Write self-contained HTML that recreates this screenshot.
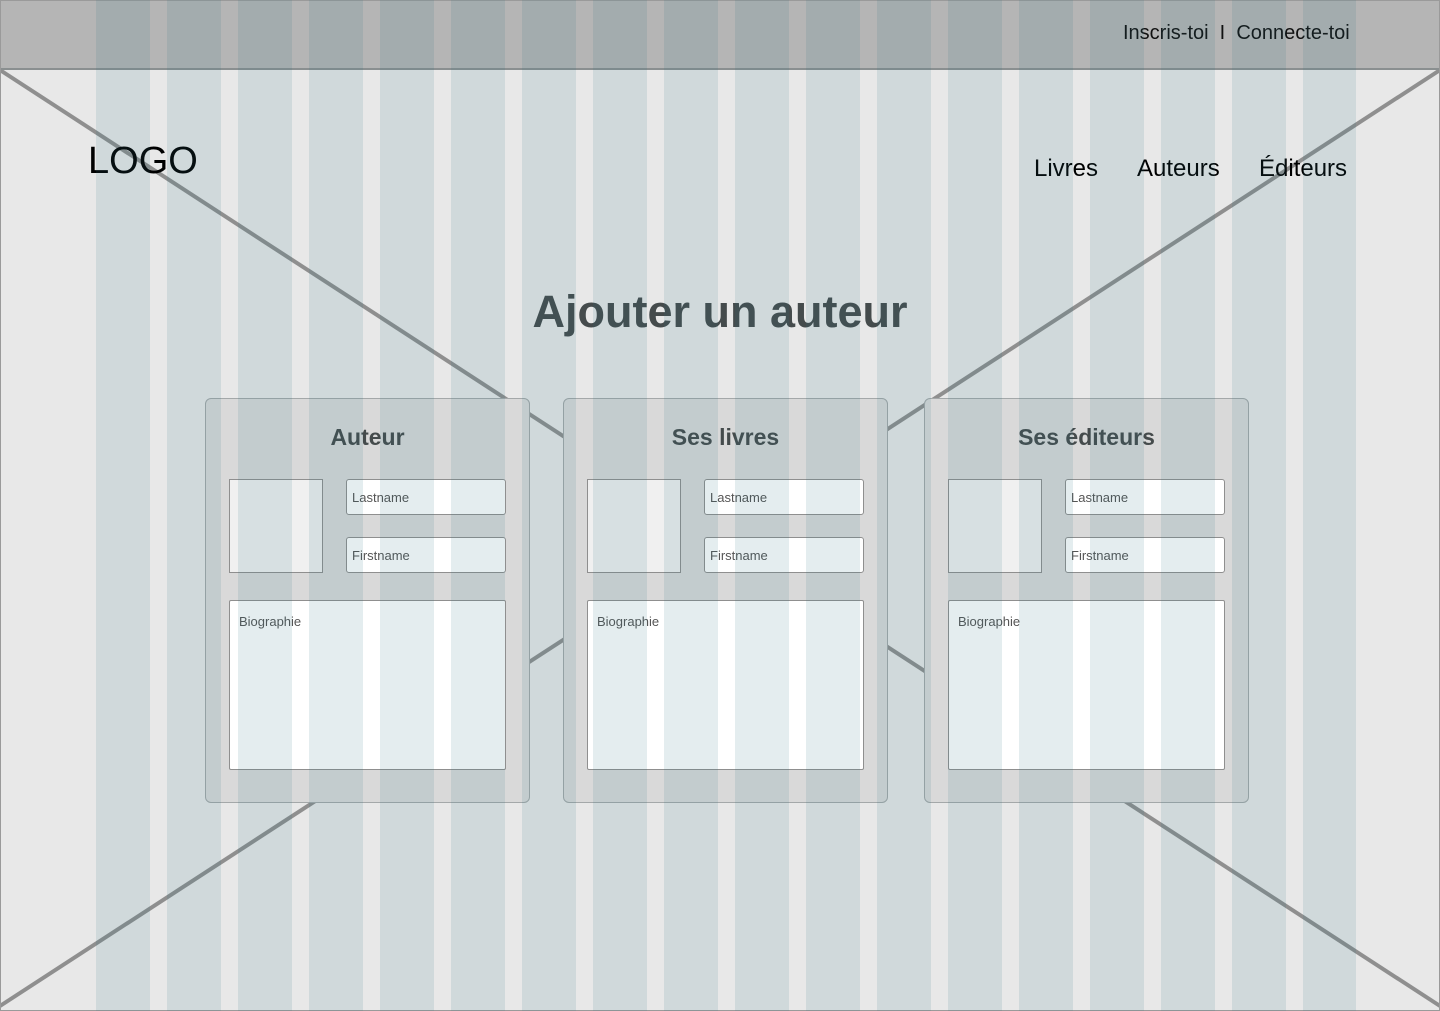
<!DOCTYPE html>
<html><head><meta charset="utf-8"><style>
*{margin:0;padding:0;box-sizing:border-box}
body{width:1440px;height:1011px;position:relative;overflow:hidden;background:#e8e8e8;font-family:"Liberation Sans",sans-serif}
.hdr{position:absolute;left:0;top:0;width:1440px;height:70px;background:#b5b5b5;border:1px solid #8f9394;border-bottom:2px solid #8a8f90}
.frame{position:absolute;left:0;top:0;width:1440px;height:1011px;border:1px solid #9a9a9a}
.t{position:absolute;white-space:nowrap}
.card{position:absolute;top:398px;width:325px;height:405px;background:#d9d9d9;border:1px solid #a4a8a9;border-radius:6px}
.card h2{position:absolute;top:25px;left:0;width:100%;text-align:center;font:bold 23px "Liberation Sans",sans-serif;color:#454b4c}
.ph{position:absolute;left:23px;top:80px;width:94px;height:94px;background:#f0f0f0;border:1px solid #8f8f8f}
.in{position:absolute;left:140px;width:160px;height:36px;background:#fff;border:1px solid #8f8f8f;border-radius:3px;font:13px "Liberation Sans",sans-serif;color:#555;padding:10px 0 0 5px}
.bio{position:absolute;left:23px;top:201px;width:277px;height:170px;background:#fff;border:1px solid #8f8f8f;border-radius:2px;font:13px "Liberation Sans",sans-serif;color:#555;padding:13px 0 0 9px}
.cols{position:absolute;left:0;top:0;width:1440px;height:1011px;pointer-events:none}
</style></head><body>
<svg class="cols" style="z-index:0" width="1440" height="1011"><line x1="0" y1="70" x2="1440" y2="1006" stroke="#8f8f8f" stroke-width="4"/><line x1="1440" y1="70" x2="0" y2="1006" stroke="#8f8f8f" stroke-width="4"/></svg>
<div class="hdr"></div>
<div class="t" style="left:1123px;top:22px;font-size:20px;color:#111">Inscris-toi &nbsp;I&nbsp; Connecte-toi</div>
<div class="t" style="left:88px;top:140px;font-size:38px;color:#000">LOGO</div>
<div class="t" style="left:1034px;top:155px;font-size:24px;color:#000">Livres</div>
<div class="t" style="left:1137px;top:155px;font-size:24px;color:#000">Auteurs</div>
<div class="t" style="left:1259px;top:155px;font-size:24px;color:#000">Éditeurs</div>
<div class="t" style="left:0;width:1440px;text-align:center;top:286px;font:bold 45px 'Liberation Sans',sans-serif;color:#454b4c">Ajouter un auteur</div>

<div class="card" style="left:205px"><h2>Auteur</h2><div class="ph"></div><div class="in" style="top:80px">Lastname</div><div class="in" style="top:138px">Firstname</div><div class="bio">Biographie</div></div>
<div class="card" style="left:563px"><h2>Ses livres</h2><div class="ph"></div><div class="in" style="top:80px">Lastname</div><div class="in" style="top:138px">Firstname</div><div class="bio">Biographie</div></div>
<div class="card" style="left:924px"><h2>Ses éditeurs</h2><div class="ph"></div><div class="in" style="top:80px">Lastname</div><div class="in" style="top:138px">Firstname</div><div class="bio">Biographie</div></div>

<svg class="cols" style="z-index:5" width="1440" height="1011">
<g fill="rgb(47,117,133)" fill-opacity="0.13">
<rect x="96" y="0" width="54" height="1011"/><rect x="167" y="0" width="54" height="1011"/><rect x="238" y="0" width="54" height="1011"/><rect x="309" y="0" width="54" height="1011"/><rect x="380" y="0" width="54" height="1011"/><rect x="451" y="0" width="54" height="1011"/><rect x="522" y="0" width="54" height="1011"/><rect x="593" y="0" width="54" height="1011"/><rect x="664" y="0" width="54" height="1011"/><rect x="735" y="0" width="54" height="1011"/><rect x="806" y="0" width="54" height="1011"/><rect x="877" y="0" width="54" height="1011"/><rect x="948" y="0" width="54" height="1011"/><rect x="1019" y="0" width="54" height="1011"/><rect x="1090" y="0" width="54" height="1011"/><rect x="1161" y="0" width="54" height="1011"/><rect x="1232" y="0" width="54" height="1011"/><rect x="1303" y="0" width="53" height="1011"/>
</g></svg>
<div class="frame"></div>
</body></html>
